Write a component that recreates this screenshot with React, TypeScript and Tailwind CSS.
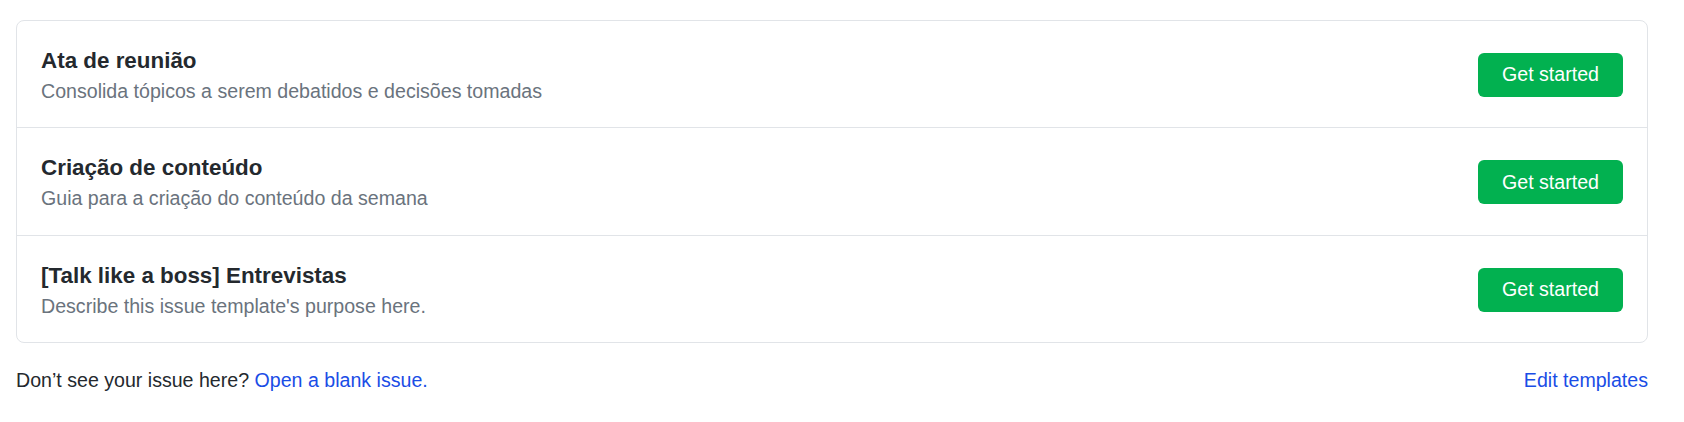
const templates = [
  {
    title: "Ata de reunião",
    description: "Consolida tópicos a serem debatidos e decisões tomadas",
  },
  {
    title: "Criação de conteúdo",
    description: "Guia para a criação do conteúdo da semana",
  },
  {
    title: "[Talk like a boss] Entrevistas",
    description: "Describe this issue template's purpose here.",
  },
];

function TemplateRow({ title, description }: { title: string; description: string }) {
  return (
    <li className="flex items-center justify-between border-t border-[#e1e4e8] first:border-t-0 pl-[24px] pr-[24px] pt-[24px] pb-[22.4px]">
      <div className="flex flex-col">
        <h3 className="text-[22.4px] leading-[32px] font-bold text-[#24292e]">{title}</h3>
        <p className="text-[19.6px] leading-[28px] text-[#6a737d]">{description}</p>
      </div>
      <button className="h-[44px] w-[145px] rounded-[6px] bg-[#02b150] text-[19.6px] text-white">
        Get started
      </button>
    </li>
  );
}

export default function App() {
  return (
    <div
      className="min-h-screen bg-white pt-[20px] pl-[16px]"
      style={{ fontFamily: '"Liberation Sans", Arial, sans-serif' }}
    >
      <div className="w-[1632px]">
        <ul className="rounded-[8px] border border-[#e1e4e8] bg-white">
          {templates.map((t) => (
            <TemplateRow key={t.title} title={t.title} description={t.description} />
          ))}
        </ul>
        <div className="mt-[23px] flex items-center justify-between text-[19.6px] leading-[28px] text-[#24292e]">
          <p>
            Don’t see your issue here?{" "}
            <a href="#" className="text-[#1a4de6]">
              Open a blank issue.
            </a>
          </p>
          <a href="#" className="text-[#1a4de6]">
            Edit templates
          </a>
        </div>
      </div>
    </div>
  );
}
